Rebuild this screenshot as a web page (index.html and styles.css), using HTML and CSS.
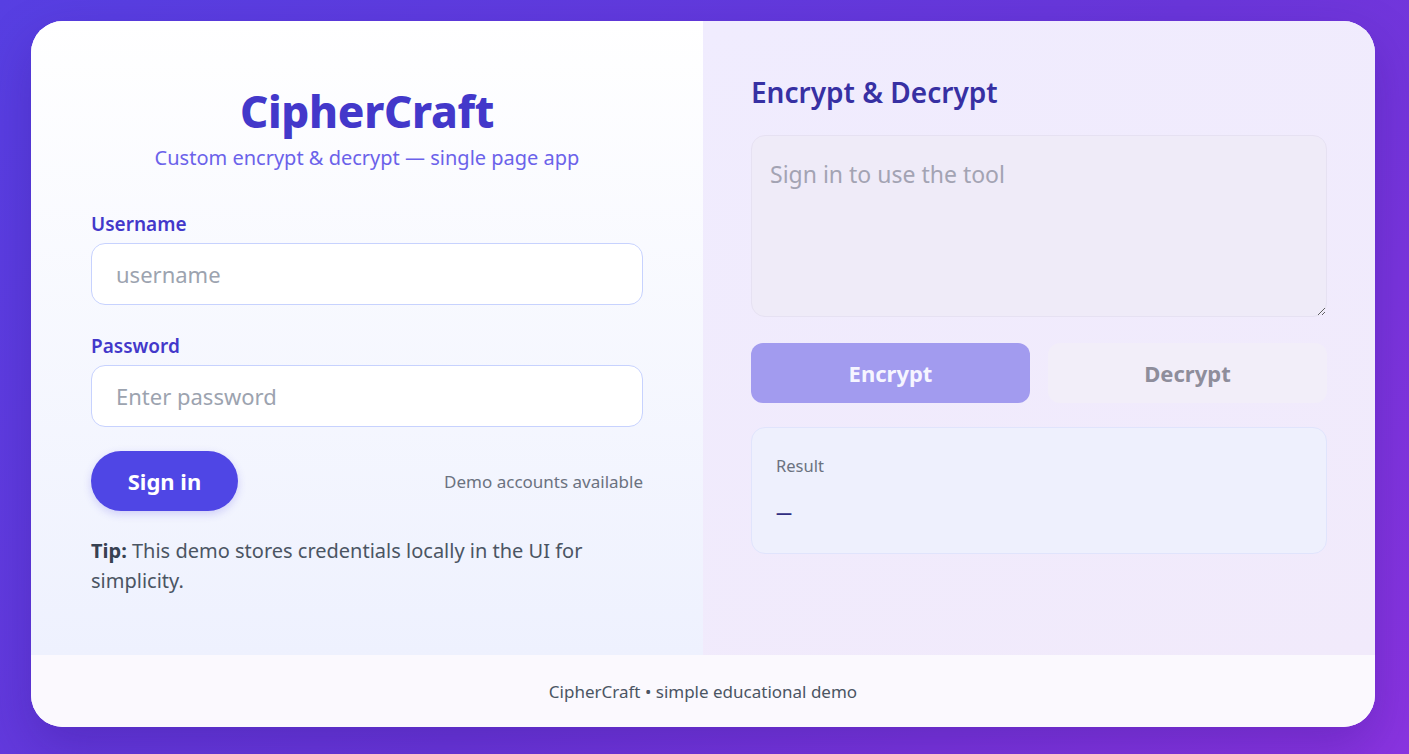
FILE: index.html
```html
<!DOCTYPE html>
<html lang="en">
<head>
<meta charset="utf-8">
<title>CipherCraft</title>
<link rel="stylesheet" href="styles.css">
</head>
<body>
<div class="card">
  <div class="main">
    <section class="left">
      <h1 class="brand">CipherCraft</h1>
      <p class="sub">Custom encrypt &amp; decrypt — single page app</p>
      <label class="label" for="u">Username</label>
      <input class="input" id="u" type="text" placeholder="username">
      <label class="label" for="p">Password</label>
      <input class="input" id="p" type="password" placeholder="Enter password">
      <div class="actions">
        <button class="signin">Sign in</button>
        <span class="demo">Demo accounts available</span>
      </div>
      <p class="tip"><b>Tip:</b> This demo stores credentials locally in the UI for simplicity.</p>
    </section>
    <section class="right">
      <h2 class="tool-title">Encrypt &amp; Decrypt</h2>
      <textarea class="area" placeholder="Sign in to use the tool" disabled></textarea>
      <div class="btns">
        <button class="btn enc" disabled>Encrypt</button>
        <button class="btn dec" disabled>Decrypt</button>
      </div>
      <div class="result">
        <div class="result-label">Result</div>
        <div class="result-val">—</div>
      </div>
    </section>
  </div>
  <footer class="foot">CipherCraft • simple educational demo</footer>
</div>
</body>
</html>
```
FILE: styles.css
```css
* { box-sizing: border-box; }
html, body { height: 100%; }
body {
  margin: 0;
  font-family: "Noto Sans", "Open Sans", sans-serif;
  background: linear-gradient(135deg, #573fe2 0%, #6a36da 55%, #8a34e0 100%);
  padding: 21px 34px 27px 31px;
}
.card {
  width: 1344px;
  height: 706px;
  border-radius: 32px;
  overflow: hidden;
  background: #fff;
  display: flex;
  flex-direction: column;
  box-shadow: 0 20px 50px rgba(40, 10, 120, 0.25);
}
.main {
  flex: 1;
  display: grid;
  grid-template-columns: 1fr 1fr;
}
.left {
  background: linear-gradient(180deg, #ffffff 0%, #eef1fe 100%);
  padding: 62px 60px 0 60px;
  display: flex;
  flex-direction: column;
}
.brand {
  margin: 0;
  text-align: center;
  font-size: 44px;
  font-weight: 800;
  color: #4338ca;
  line-height: 56px;
  letter-spacing: -0.3px;
}
.sub {
  margin: 4px 0 38px;
  text-align: center;
  font-size: 20px;
  color: #6b62ea;
  line-height: 30px;
}
.label {
  font-size: 19px;
  font-weight: 600;
  color: #4338ca;
  line-height: 26px;
  margin-bottom: 6px;
}
.input {
  height: 62px;
  border: 1px solid #c7d2fe;
  border-radius: 14px;
  background: #fff;
  padding: 0 24px;
  font-family: inherit;
  font-size: 22px;
  color: #111827;
  margin-bottom: 28px;
  outline: none;
}
.input::placeholder { color: #9ca3af; }
.actions {
  display: flex;
  align-items: center;
  justify-content: space-between;
  margin-top: -4px;
}
.signin {
  height: 60px;
  width: 147px;
  border: none;
  border-radius: 30px;
  background: #4f46e5;
  color: #fff;
  font-family: inherit;
  font-size: 22px;
  font-weight: 700;
  box-shadow: 0 3px 8px rgba(79, 70, 229, 0.22);
}
.demo {
  font-size: 17px;
  color: #6b7280;
}
.tip {
  margin: 25px 0 0;
  font-size: 20px;
  line-height: 30px;
  color: #4b5563;
}
.tip b { color: #374151; }
.right {
  background: linear-gradient(160deg, #f0ecfe 0%, #f1eafb 100%);
  padding: 51px 48px 0 48px;
  display: flex;
  flex-direction: column;
}
.tool-title {
  margin: 0 0 23px;
  font-size: 28px;
  font-weight: 600;
  color: #3730a3;
  line-height: 40px;
}
.area {
  height: 182px;
  resize: vertical;
  border: 1px solid #e6e1f2;
  border-radius: 14px;
  background: #efebf8;
  padding: 22px 18px;
  font-family: inherit;
  font-size: 23px;
  line-height: 32px;
}
.area::placeholder { color: #a3a3b3; }
.btns {
  display: grid;
  grid-template-columns: 1fr 1fr;
  gap: 18px;
  margin-top: 26px;
}
.btn {
  height: 60px;
  border: none;
  border-radius: 12px;
  font-family: inherit;
  font-size: 22px;
  font-weight: 700;
}
.enc { background: #a29bef; color: #f6f5ff; }
.dec { background: #f2eef9; color: #8e8d9b; }
.result {
  margin-top: 24px;
  height: 127px;
  border: 1px solid #e0e4fc;
  border-radius: 14px;
  background: #eef0fd;
  padding: 26px 24px;
}
.result-label {
  font-size: 16.5px;
  color: #6b7280;
  line-height: 24px;
}
.result-val {
  margin-top: 20px;
  font-size: 16px;
  font-weight: 700;
  color: #312e81;
  line-height: 28px;
}
.foot {
  height: 72px;
  background: #fbf9fe;
  display: flex;
  align-items: center;
  justify-content: center;
  font-size: 17px;
  color: #4b5563;
}
```
